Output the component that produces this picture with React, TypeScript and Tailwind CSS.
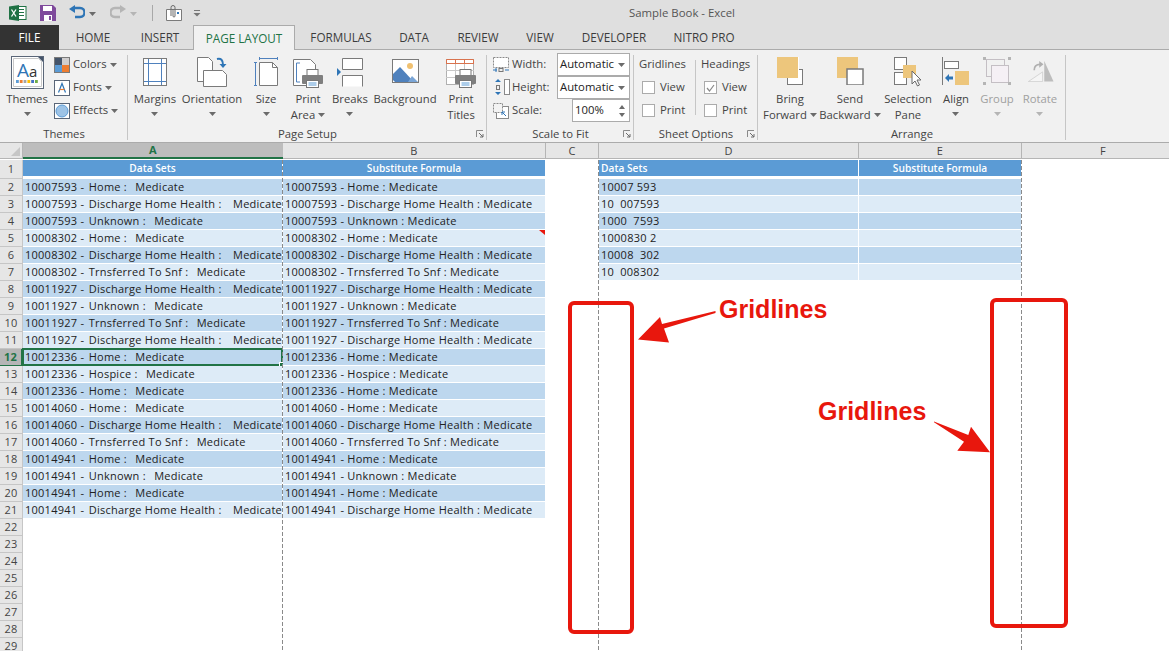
import type { ReactNode } from "react";

const Caret = ({ muted }: { muted?: boolean }) => (
  <svg width="7" height="4" viewBox="0 0 7 4" className="inline-block shrink-0">
    <path d="M0 0h7L3.5 4z" fill={muted ? "#b5b5b5" : "#6b6b6b"} />
  </svg>
);

const Launcher = () => (
  <svg width="8" height="8" viewBox="0 0 8 8" className="absolute right-[3px] bottom-[4px]">
    <path d="M0.5 7V0.5H7" fill="none" stroke="#8a8a8a" />
    <path d="M3 3l4 4M7 4v3H4" fill="none" stroke="#6a6a6a" />
  </svg>
);

const Printer = ({ x, y }: { x: number; y: number }) => (
  <g transform={`translate(${x} ${y})`}>
    <rect x="5" y="0.5" width="11" height="7" fill="#fff" stroke="#777" />
    <rect x="0" y="6" width="21" height="9" rx="1" fill="#7f7f7f" />
    <rect x="4.5" y="11.5" width="12" height="7" fill="#fff" stroke="#777" />
    <path d="M6.5 14h8M6.5 16h8" stroke="#5b9bd5" />
  </g>
);

const ThemesIcon = () => (
  <svg width="33" height="33" viewBox="0 0 33 33">
    <rect x="0.5" y="0.5" width="32" height="32" fill="#fff" stroke="#5a6678" />
    <path d="M2.5 2.5h25l3 3v25h-28z" fill="#fff" stroke="#c8c8c8" />
    <path d="M27 1h5v5z" fill="#44546a" />
    <text x="6" y="21" fontSize="19" fill="#2e75b6" fontFamily="Open Sans, sans-serif">A</text>
    <text x="18" y="21" fontSize="15" fill="#333" fontFamily="Open Sans, sans-serif">a</text>
    {["#5b9bd5", "#ed7d31", "#a5a5a5", "#ffc000", "#4472c4", "#70ad47"].map((c, i) => (
      <rect key={c} x={5 + i * 3.8} y="24" width="2.8" height="3" fill={c} />
    ))}
  </svg>
);

const MarginsIcon = () => (
  <svg width="24" height="28" viewBox="0 0 24 28">
    <rect x="0.5" y="0.5" width="23" height="27" fill="#fff" stroke="#7a7a7a" />
    <path d="M5.5 1v26M18.5 1v26M1 5.5h22M1 23.5h22" stroke="#4f81bd" />
  </svg>
);

const OrientationIcon = () => (
  <svg width="30" height="30" viewBox="0 0 30 30">
    <path d="M0.5 0.5h11l4 4v20h-15z" fill="#fff" stroke="#7a7a7a" />
    <path d="M6.5 13.5h19l4 4v12h-23z" fill="#fff" stroke="#7a7a7a" />
    <path d="M20 2c4-1 6 1 6 6" fill="none" stroke="#2e75b6" strokeWidth="2" />
    <path d="M22.5 7h7l-3.5 4z" fill="#2e75b6" />
  </svg>
);

const SizeIcon = () => (
  <svg width="25" height="29" viewBox="0 0 25 29">
    <path d="M5 1.5h19M5.5 0v3M23.5 0v3M0 5.5h3M1.5 5.5v23M0 28.5h3" fill="none" stroke="#4f81bd" />
    <path d="M5.5 5.5h13l5 5v18h-18z" fill="#fff" stroke="#7a7a7a" />
    <path d="M18.5 5.5v5h5" fill="none" stroke="#7a7a7a" />
  </svg>
);

const PrintAreaIcon = () => (
  <svg width="31" height="30" viewBox="0 0 31 30">
    <path d="M0.5 0.5h17l5 5v21h-22z" fill="#fff" stroke="#7a7a7a" />
    <path d="M7 4H3.5v19H7" fill="none" stroke="#4f81bd" />
    <Printer x={9} y={10} />
  </svg>
);

const BreaksIcon = () => (
  <svg width="26" height="29" viewBox="0 0 26 29">
    <path d="M5.5 0.5h20v11h-20z" fill="#fff" stroke="#7a7a7a" />
    <path d="M5.5 28.5v-11h20v11" fill="#fff" stroke="#7a7a7a" />
    <path d="M0 10l4 4-4 4z" fill="#2e75b6" />
  </svg>
);

const BackgroundIcon = () => (
  <svg width="27" height="24" viewBox="0 0 27 24">
    <rect x="0.5" y="0.5" width="26" height="23" fill="#fff" stroke="#7a7a7a" />
    <circle cx="18" cy="7" r="3" fill="#f0c070" />
    <path d="M1 21V15L8 8l14 15H3z" fill="#4f81bd" />
    <path d="M16 23l4-6 6 6z" fill="#7aa5d6" />
  </svg>
);

const PrintTitlesIcon = () => (
  <svg width="31" height="30" viewBox="0 0 31 30">
    <rect x="0.5" y="0.5" width="27" height="25" fill="#fff" stroke="#b0b0b0" />
    <path d="M0 4.5h28M0.5 0.5h27" stroke="#d9734e" />
    <path d="M0.5 0.5v4M9.5 0.5v4M18.5 0.5v4M27.5 0.5v4" stroke="#d9734e" />
    <path d="M0 11.5h28M0 18.5h28M9.5 5v20M18.5 5v20" stroke="#c8c8c8" />
    <Printer x={9} y={10} />
  </svg>
);

const BringIcon = () => (
  <svg width="27" height="28" viewBox="0 0 27 28">
    <rect x="10.5" y="12.5" width="15" height="15" fill="#fff" stroke="#7a7a7a" />
    <rect x="0" y="0" width="21" height="21" fill="#edc67c" />
    <path d="M21 0v21H11v1h11V0z" fill="#fff" />
  </svg>
);

const SendIcon = () => (
  <svg width="27" height="28" viewBox="0 0 27 28">
    <rect x="0" y="0" width="21" height="21" fill="#edc67c" />
    <rect x="10" y="12" width="16" height="16" fill="#fff" stroke="#7a7a7a" strokeWidth="1.5" />
  </svg>
);

const SelectionIcon = () => (
  <svg width="28" height="30" viewBox="0 0 28 30">
    <rect x="0.5" y="0.5" width="12" height="12" fill="#fff" stroke="#7a7a7a" />
    <rect x="0.5" y="15.5" width="12" height="12" fill="#fff" stroke="#7a7a7a" />
    <rect x="9" y="8" width="13" height="13" fill="#edc67c" />
    <path d="M18 14v13l3-3 2.500 5 2-1-2.500-5h4z" fill="#fff" stroke="#6a6a6a" />
  </svg>
);

const AlignIcon = () => (
  <svg width="28" height="29" viewBox="0 0 28 29">
    <path d="M0.5 0v28" stroke="#7a7a7a" />
    <rect x="2.5" y="4.500" width="14" height="7" fill="#fff" stroke="#7a7a7a" />
    <rect x="13" y="14" width="14" height="14" fill="#edc67c" />
    <path d="M3 21l4-4v2.500h4v3H7V25z" fill="#2e75b6" />
  </svg>
);

const GroupIcon = () => (
  <svg width="28" height="29" viewBox="0 0 28 29">
    <rect x="3.500" y="2.500" width="18" height="17" fill="none" stroke="#c4bfc4" />
    <rect x="8.500" y="8.500" width="17" height="17" fill="#f5f0f5" stroke="#c4bfc4" />
    <path d="M0 0h3v3H0zM25 0h3v3h-3zM0 25h3v3H0zM25 25h3v3h-3z" fill="#b5b5b5" />
  </svg>
);

const RotateIcon = () => (
  <svg width="31" height="21" viewBox="0 0 31 25">
    <path d="M1 24.500L18 13v11.500z" fill="#f5f5f5" stroke="#cfcfcf" />
    <path d="M20 0l11 24.500H20z" fill="#bdbdbd" />
    <path d="M8 11c0-5 3-7 7-7" fill="none" stroke="#b0b0b0" strokeWidth="2" />
    <path d="M14 0l5 4-5 4z" fill="#b0b0b0" />
  </svg>
);

const ColorsIcon = () => (
  <svg width="16" height="16" viewBox="0 0 16 16">
    <rect width="8" height="8" fill="#44546a" />
    <rect x="8" width="8" height="8" fill="#d0cece" />
    <rect y="8" width="8" height="8" fill="#5b9bd5" />
    <rect x="8" y="8" width="8" height="8" fill="#ed7d31" />
    <rect x="0.5" y="0.500" width="15" height="15" fill="none" stroke="#7a7a7a" />
  </svg>
);

const FontsIcon = () => (
  <svg width="16" height="16" viewBox="0 0 16 16">
    <rect x="0.500" y="0.500" width="15" height="15" fill="#fff" stroke="#5a6678" />
    <path d="M4.500 12.500L8 3.500l3.500 9" fill="none" stroke="#2e75b6" strokeWidth="1.200" />
    <path d="M5.500 9.500h5" stroke="#ed7d31" strokeWidth="1.200" />
  </svg>
);

const EffectsIcon = () => (
  <svg width="16" height="16" viewBox="0 0 16 16">
    <rect x="0.500" y="0.500" width="15" height="15" fill="#fff" stroke="#5a6678" />
    <circle cx="8" cy="8" r="6" fill="#9dc3e6" stroke="#5b9bd5" />
  </svg>
);

const WidthIcon = () => (
  <svg width="17" height="16" viewBox="0 0 17 16">
    <rect x="0.500" y="0.500" width="15" height="10" fill="#fff" stroke="#8a8a8a" strokeDasharray="2 1" />
    <path d="M0 13h4M3 11v4M12 13h4" stroke="#2e75b6" />
    <rect x="6" y="11.500" width="4" height="3" fill="none" stroke="#777" />
  </svg>
);

const HeightIcon = () => (
  <svg width="17" height="17" viewBox="0 0 17 17">
    <rect x="11.500" y="0.500" width="5" height="15" fill="#fff" stroke="#8a8a8a" />
    <path d="M5 0L2 3h6zM5 16l-3-3h6z" fill="#2e75b6" />
    <rect x="3.500" y="6.500" width="3" height="4" fill="none" stroke="#777" />
  </svg>
);

const ScaleIcon = () => (
  <svg width="16" height="16" viewBox="0 0 16 16">
    <rect x="3.500" y="3.500" width="12" height="12" fill="#fff" stroke="#8a8a8a" />
    <rect x="0.500" y="0.500" width="9" height="9" fill="#f3f3f3" stroke="#8a8a8a" strokeDasharray="2 1" />
    <path d="M13 13L9 9M9 12V9h3" fill="none" stroke="#2e75b6" />
  </svg>
);

const Big = ({
  icon,
  lines,
  w,
  top,
  caretInline,
  noCaret,
  muted,
}: {
  icon: ReactNode;
  lines: string[];
  w: string;
  top: string;
  caretInline?: boolean;
  noCaret?: boolean;
  muted?: boolean;
}) => (
  <div className={`flex flex-col items-center ${w} ${muted ? "text-[#a0a0a0]" : ""}`}>
    <div className={`flex h-[37px] items-start justify-center ${top}`}>{icon}</div>
    <div className="text-center leading-[16px] whitespace-nowrap">
      <div>{lines[0]}</div>
      {lines[1] && (
        <div className="flex items-center justify-center gap-[3px]">
          {lines[1]}
          {caretInline && <Caret />}
        </div>
      )}
      {!lines[1] && !noCaret && (
        <div className="flex h-[14px] items-center justify-center">
          <Caret muted={muted} />
        </div>
      )}
    </div>
  </div>
);

const Group = ({
  label,
  w,
  launcher,
  children,
}: {
  label: string;
  w: string;
  launcher?: boolean;
  children: ReactNode;
}) => (
  <div className={`relative flex h-full flex-col ${w}`}>
    <div className="flex h-[74px] pt-[2px]">{children}</div>
    <div className="absolute top-[3px] right-0 bottom-[2px] w-px bg-[#c6c6c6]" />
    <div className="mt-auto text-center leading-[16px]">{label}</div>
    {launcher && <Launcher />}
  </div>
);

const SmallRow = ({ icon, label }: { icon: ReactNode; label: string }) => (
  <div className="flex h-[23px] items-center gap-[3px]">
    {icon}
    <span>{label}</span>
    <Caret />
  </div>
);

const Check = ({ on }: { on?: boolean }) => (
  <span className="flex h-[13px] w-[13px] items-center justify-center border border-[#ababab] bg-white">
    {on && (
      <svg width="9" height="8" viewBox="0 0 9 8">
        <path d="M1 4l2.500 3L8 1" fill="none" stroke="#8a8a8a" strokeWidth="1.200" />
      </svg>
    )}
  </span>
);

const CheckRow = ({ on, label }: { on?: boolean; label: string }) => (
  <div className="flex h-[23px] items-center gap-[5px] pl-[3px]">
    <Check on={on} />
    <span>{label}</span>
  </div>
);

const tabs: [string, string][] = [
  ["HOME", "w-[68px]"],
  ["INSERT", "w-[66px]"],
];
const tabsAfter: [string, string][] = [
  ["FORMULAS", "w-[92px]"],
  ["DATA", "w-[54px]"],
  ["REVIEW", "w-[74px]"],
  ["VIEW", "w-[50px]"],
  ["DEVELOPER", "w-[98px]"],
  ["NITRO PRO", "w-[82px]"],
];

const TitleBar = () => (
  <div className="flex h-[25px] items-center bg-[#dfdfdf] pl-[9px]">
    <svg width="18" height="16" viewBox="0 0 18 16">
      <rect x="7" y="1.500" width="10" height="13" fill="#fff" stroke="#207245" />
      <path d="M9 4.500h6M9 7.500h6M9 10.500h6" stroke="#207245" />
      <path d="M0 1.500L10 0v16L0 14.500z" fill="#207245" />
      <path d="M2.500 4.500l4.500 7M7 4.500l-4.500 7" stroke="#fff" strokeWidth="1.300" />
    </svg>
    <svg width="16" height="16" viewBox="0 0 16 16" className="ml-[13px]">
      <path d="M0 0h13l3 3v13H0z" fill="#7f4a9c" />
      <rect x="3" y="1" width="9" height="5" fill="#fff" />
      <rect x="4" y="10" width="8" height="6" fill="#fff" />
      <rect x="9" y="11" width="2" height="4" fill="#7f4a9c" />
    </svg>
    <svg width="16" height="15" viewBox="0 0 16 15" className="ml-[13px]">
      <path d="M5 3h6c6 0 6 9 0 9H6" fill="none" stroke="#2e75b6" strokeWidth="2.400" />
      <path d="M6 0L0 4l6 4z" fill="#2e75b6" />
    </svg>
    <span className="ml-[4px]">
      <Caret />
    </span>
    <svg width="16" height="15" viewBox="0 0 16 15" className="ml-[14px]">
      <path d="M11 3H5c-6 0-6 9 0 9h5" fill="none" stroke="#b5b5b5" strokeWidth="2.400" />
      <path d="M10 0l6 4-6 4z" fill="#b5b5b5" />
    </svg>
    <span className="ml-[4px]">
      <Caret muted />
    </span>
    <div className="ml-[15px] h-[16px] w-px bg-[#a8a8a8]" />
    <svg width="16" height="17" viewBox="0 0 16 17" className="ml-[13px]">
      <path d="M0.500 5.500h15v11h-15z" fill="#fff" stroke="#7a7a7a" />
      <path d="M5 12V3.500a2 2 0 0 1 4 0V12a1 1 0 0 1-2 0V5" fill="none" stroke="#6a6a6a" />
      <rect x="11" y="8" width="2" height="2" fill="#2e75b6" />
    </svg>
    <svg width="8" height="8" viewBox="0 0 8 8" className="ml-[11px]">
      <path d="M1 1.500h6" stroke="#777" />
      <path d="M0.500 4h7L4 7.500z" fill="#777" />
    </svg>
    <div className="ml-[428px] text-[11.4px] text-[#555]">Sample Book - Excel</div>
  </div>
);

const TabBar = () => (
  <div className="relative flex h-[25px] items-stretch border-b border-[#ababab] bg-[#dfdfdf] text-[11.7px] leading-[25px] text-[#3c3c3c]">
    <div className="h-[25px] w-[59px] bg-[#333333] text-center text-white">FILE</div>
    {tabs.map(([t, w]) => (
      <div key={t} className={`${w} text-center`}>
        {t}
      </div>
    ))}
    <div className="h-[25px] w-[102px] border-x border-t border-[#ababab] bg-[#f1f1f1] text-center text-[#217346]">
      PAGE LAYOUT
    </div>
    {tabsAfter.map(([t, w]) => (
      <div key={t} className={`${w} text-center`}>
        {t}
      </div>
    ))}
  </div>
);

const Ribbon = () => (
  <div className="flex h-[93px] border-b border-[#ababab] bg-[#f1f1f1] pt-[2px] text-[11.3px] text-[#444]">
    <Group label="Themes" w="w-[128px]">
      <div className="w-[54px]">
        <Big w="w-[54px]" top="pt-[2px]" icon={<ThemesIcon />} lines={["Themes"]} />
      </div>
      <div className="-mt-[1px]">
        <SmallRow icon={<ColorsIcon />} label="Colors" />
        <SmallRow icon={<FontsIcon />} label="Fonts" />
        <SmallRow icon={<EffectsIcon />} label="Effects" />
      </div>
    </Group>
    <Group label="Page Setup" w="w-[359px]" launcher>
      <div className="w-[5px]" />
      <Big w="w-[44px]" top="pt-[4px]" icon={<MarginsIcon />} lines={["Margins"]} />
      <Big w="w-[70px]" top="pt-[3px]" icon={<OrientationIcon />} lines={["Orientation"]} />
      <Big w="w-[38px]" top="pt-[3px]" icon={<SizeIcon />} lines={["Size"]} />
      <Big w="w-[46px]" top="pt-[5px]" icon={<PrintAreaIcon />} lines={["Print", "Area"]} caretInline />
      <Big w="w-[38px]" top="pt-[4px]" icon={<BreaksIcon />} lines={["Breaks"]} />
      <Big w="w-[72px]" top="pt-[5px]" icon={<BackgroundIcon />} lines={["Background"]} noCaret />
      <Big w="w-[40px]" top="pt-[5px]" icon={<PrintTitlesIcon />} lines={["Print", "Titles"]} />
    </Group>
    <Group label="Scale to Fit" w="w-[147px]" launcher>
      <div className="-mt-[1px] grid grid-cols-[19px_45px_73px] grid-rows-[23px_23px_23px] items-center pl-[6px]">
        <WidthIcon />
        <span>Width:</span>
        <div className="flex h-[23px] w-[73px] items-center justify-between border border-[#ababab] bg-white pr-[4px] pl-[2px] text-[#222]">
          Automatic
          <Caret />
        </div>
        <HeightIcon />
        <span>Height:</span>
        <div className="flex h-[23px] w-[73px] items-center justify-between border border-[#ababab] bg-white pr-[4px] pl-[2px] text-[#222]">
          Automatic
          <Caret />
        </div>
        <ScaleIcon />
        <span>Scale:</span>
        <div className="ml-[15px] flex h-[23px] w-[58px] items-center justify-between border border-[#ababab] bg-white pr-[4px] pl-[2px] text-[#222]">
          100%
          <div className="flex flex-col gap-[4px]">
            <svg width="6" height="4" viewBox="0 0 6 4">
              <path d="M0 4h6L3 0z" fill="#6b6b6b" />
            </svg>
            <svg width="6" height="4" viewBox="0 0 6 4">
              <path d="M0 0h6L3 4z" fill="#6b6b6b" />
            </svg>
          </div>
        </div>
      </div>
    </Group>
    <Group label="Sheet Options" w="w-[124px]" launcher>
      <div className="-mt-[1px] flex pl-[5px]">
        <div className="w-[56px]">
          <div className="flex h-[23px] items-center">Gridlines</div>
          <CheckRow label="View" />
          <CheckRow label="Print" />
        </div>
        <div className="mt-[7px] mb-[3px] h-[55px] w-px bg-[#c6c6c6]" />
        <div className="pl-[5px]">
          <div className="flex h-[23px] items-center">Headings</div>
          <CheckRow on label="View" />
          <CheckRow label="Print" />
        </div>
      </div>
    </Group>
    <Group label="Arrange" w="w-[308px]">
      <div className="w-[4px]" />
      <Big w="w-[56px]" top="pt-[3px]" icon={<BringIcon />} lines={["Bring", "Forward"]} caretInline />
      <Big w="w-[64px]" top="pt-[3px]" icon={<SendIcon />} lines={["Send", "Backward"]} caretInline />
      <Big w="w-[52px]" top="pt-[3px]" icon={<SelectionIcon />} lines={["Selection", "Pane"]} />
      <Big w="w-[44px]" top="pt-[3px]" icon={<AlignIcon />} lines={["Align"]} />
      <Big w="w-[38px]" top="pt-[3px]" icon={<GroupIcon />} lines={["Group"]} muted />
      <Big w="w-[48px]" top="pt-[7px]" icon={<RotateIcon />} lines={["Rotate"]} muted />
    </Group>
  </div>
);

const rowsA = [
  ["10007593", "Home"],
  ["10007593", "Discharge Home Health"],
  ["10007593", "Unknown"],
  ["10008302", "Home"],
  ["10008302", "Discharge Home Health"],
  ["10008302", "Trnsferred To Snf"],
  ["10011927", "Discharge Home Health"],
  ["10011927", "Unknown"],
  ["10011927", "Trnsferred To Snf"],
  ["10011927", "Discharge Home Health"],
  ["10012336", "Home"],
  ["10012336", "Hospice"],
  ["10012336", "Home"],
  ["10014060", "Home"],
  ["10014060", "Discharge Home Health"],
  ["10014060", "Trnsferred To Snf"],
  ["10014941", "Home"],
  ["10014941", "Unknown"],
  ["10014941", "Home"],
  ["10014941", "Discharge Home Health"],
];
const rowsD = ["10007 593", "10  007593", "1000  7593", "1000830 2", "10008  302", "10  008302"];
const colHeads = ["A", "B", "C", "D", "E", "F"];
const rowNumbers = Array.from({ length: 29 }, (_, i) => i + 2);

const cell = "h-[17px] overflow-hidden border-r border-b border-white pl-[2px] leading-[16px] whitespace-pre";
const head =
  "h-[19px] border-r border-b-[3px] border-white bg-[#5b9bd5] text-[10.2px] leading-[16px] font-semibold tracking-normal text-white";
const rowHead = "h-[17px] border-r border-b border-[#c6c6c6] bg-[#e6e6e6] text-center leading-[16px] text-[#444]";
const dashed =
  "absolute top-[17px] bottom-0 w-px bg-[repeating-linear-gradient(to_bottom,#8a8a8a_0_4px,transparent_4px_6px)]";

const Sheet = () => (
  <div className="relative flex-1 overflow-hidden bg-white font-['Open_Sans',sans-serif] text-[11px] tracking-[0.25px] text-[#222]">
    <div className="grid grid-cols-[23px_260px_263px_53px_260px_163px_163px]">
      <div className="relative h-[16px] border-r border-b border-[#b5b5b5] bg-[#e6e6e6]">
        <svg width="9" height="9" viewBox="0 0 9 9" className="absolute top-[4px] left-[11px]">
          <path d="M9 0v9H0z" fill="#c6c6c6" />
        </svg>
      </div>
      {colHeads.map((c) => (
        <div
          key={c}
          className={
            c === "A"
              ? "h-[16px] border-b-2 border-[#217346] bg-[#bdbdbd] text-center leading-[14px] font-bold text-[#217346]"
              : "h-[16px] border-r border-b border-[#b5b5b5] bg-[#e6e6e6] text-center leading-[15px] text-[#444]"
          }
        >
          {c}
        </div>
      ))}

      <div className="mt-[1px] h-[19px] border-r border-b border-[#c6c6c6] bg-[#e6e6e6] text-center leading-[18px] text-[#444]">1</div>
      <div className={`${head} mt-[1px] text-center`}>Data Sets</div>
      <div className={`${head} mt-[1px] text-center`}>Substitute Formula</div>
      <div />
      <div className={`${head} mt-[1px] pl-[2px]`}>Data Sets</div>
      <div className={`${head} mt-[1px] text-center`}>Substitute Formula</div>
      <div />

      {rowNumbers.map((n) => {
        const row = rowsA[n - 2];
        const fill = n % 2 === 0 ? "bg-[#bdd7ee]" : "bg-[#ddebf7]";
        const d = rowsD[n - 2];
        return (
          <div key={n} className="contents">
            <div className={n === 12 ? "h-[17px] border-r-2 border-b border-[#217346] bg-[#b5b5b5] text-center leading-[16px] font-bold text-[#217346]" : rowHead}>
              {n}
            </div>
            {row ? (
              <div className={`${cell} ${fill} ${n === 12 ? "overflow-visible" : ""} relative`}>
                {`${row[0]} -\u200a ${row[1]} :  \u2009${row[1] === "Discharge Home Health" ? " " : ""}Medicate`}
                {n === 12 && (
                  <div className="absolute -top-px -left-px h-[18px] w-[261px] border-2 border-[#217346]">
                    <div className="absolute -right-[3px] -bottom-[3px] h-[5px] w-[5px] border border-white bg-[#217346]" />
                  </div>
                )}
              </div>
            ) : (
              <div />
            )}
            {row ? (
              <div className={`${cell} ${fill} relative`}>
                {`${row[0]} - ${row[1]} : Medicate`}
                {n === 5 && (
                  <svg width="6" height="5" viewBox="0 0 6 5" className="absolute top-0 right-0">
                    <path d="M0 0h6v5z" fill="#e8170d" />
                  </svg>
                )}
              </div>
            ) : (
              <div />
            )}
            <div />
            {d ? <div className={`${cell} ${fill}`}>{d}</div> : <div />}
            {d ? <div className={`${cell} ${fill}`} /> : <div />}
            <div />
          </div>
        );
      })}
    </div>
    <div className={`${dashed} left-[282px]`} />
    <div className={`${dashed} left-[598px]`} />
    <div className={`${dashed} left-[1021px]`} />
  </div>
);

// red call-outs drawn on top of the sheet
const Annotations = () => (
  <>
    <svg width="1169" height="651" viewBox="0 0 1169 651" className="pointer-events-none absolute top-0 left-0">
      <rect x="570" y="303" width="62" height="329" rx="4" fill="none" stroke="#e8170d" strokeWidth="4" />
      <rect x="992" y="300" width="74" height="326" rx="4" fill="none" stroke="#e8170d" strokeWidth="4" />
      <path d="M715.500 311L662 324l-2-7-22 22.500 31 3-5-14 51.500-15.500z" fill="#e8170d" />
      <path d="M934 421.500l34.300 13.500 2.700-8.300 19 25.600-32.700-1.600 6.700-9-30-19.500z" fill="#e8170d" />
    </svg>
    <div className="absolute top-[295px] left-[719px] font-['Liberation_Sans',sans-serif] text-[25px] leading-[28px] font-bold text-[#e8170d]">
      Gridlines
    </div>
    <div className="absolute top-[397px] left-[818px] font-['Liberation_Sans',sans-serif] text-[25px] leading-[28px] font-bold text-[#e8170d]">
      Gridlines
    </div>
  </>
);

export default function App() {
  return (
    <div className="relative flex h-[651px] w-[1169px] flex-col overflow-hidden bg-white font-['Open_Sans',sans-serif]">
      <TitleBar />
      <TabBar />
      <Ribbon />
      <Sheet />
      <Annotations />
    </div>
  );
}
